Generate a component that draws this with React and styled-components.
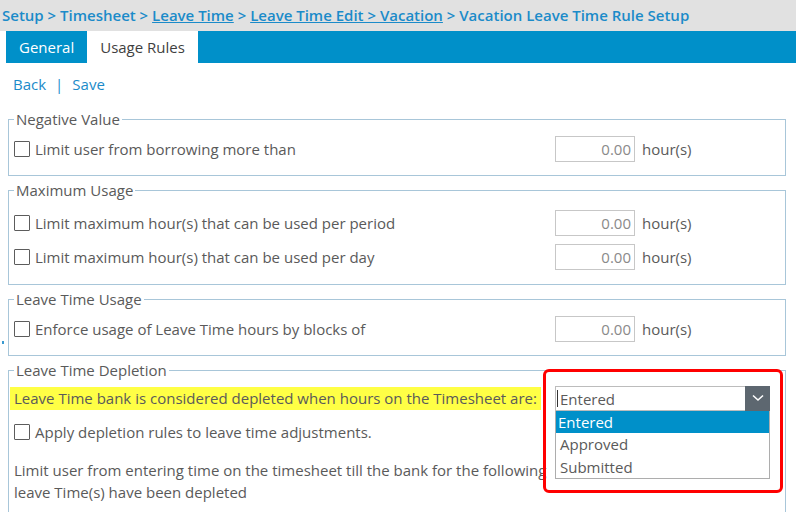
import React from 'react'
import styled, { createGlobalStyle } from 'styled-components'

const GlobalStyle = createGlobalStyle`
  body {
    margin: 0;
    background: #fff;
    font-family: "Open Sans", "Liberation Sans", sans-serif;
    color: #5a5a5a;
  }
`

const sections = [
  {
    title: 'Negative Value',
    rows: ['Limit user from borrowing more than'],
  },
  {
    title: 'Maximum Usage',
    rows: [
      'Limit maximum hour(s) that can be used per period',
      'Limit maximum hour(s) that can be used per day',
    ],
    roomy: true,
  },
  {
    title: 'Leave Time Usage',
    rows: ['Enforce usage of Leave Time hours by blocks of'],
    dot: true,
  },
]

const options = ['Entered', 'Approved', 'Submitted']

const App = () => {
  return (
    <Page>
      <GlobalStyle />
      <Breadcrumb>
        Setup &gt; Timesheet &gt; <Crumb>Leave Time</Crumb> &gt;{' '}
        <Crumb>Leave Time Edit &gt; Vacation</Crumb> &gt; Vacation Leave Time Rule Setup
      </Breadcrumb>
      <TabBar>
        <Tab>General</Tab>
        <Tab active>Usage Rules</Tab>
      </TabBar>
      <Actions>
        <ActionLink>Back</ActionLink>
        <Divider>|</Divider>
        <ActionLink>Save</ActionLink>
      </Actions>

      {sections.map(section => (
        <Section key={section.title} dot={section.dot} roomy={section.roomy}>
          <Legend>{section.title}</Legend>
          {section.rows.map(label => (
            <Row key={label}>
              <Label>
                <Check />
                {label}
              </Label>
              <HourInput readOnly value="0.00" />
              <Unit>hour(s)</Unit>
            </Row>
          ))}
        </Section>
      ))}

      <Section tight>
        <Legend>Leave Time Depletion</Legend>
        <Row>
          <Label>
            <Highlight>Leave Time bank is considered depleted when hours on the Timesheet are:</Highlight>
          </Label>
          <SelectWrap>
            <SelectBox>
              <SelectValue>Entered</SelectValue>
              <Arrow>
                <svg width="12" height="8" viewBox="0 0 12 8">
                  <polyline points="1,1.5 6,6 11,1.5" fill="none" stroke="#fff" strokeWidth="1.6" />
                </svg>
              </Arrow>
            </SelectBox>
            <OptionList>
              {options.map((opt, i) => (
                <Option key={opt} selected={i === 0}>{opt}</Option>
              ))}
            </OptionList>
            <Callout />
          </SelectWrap>
        </Row>
        <Row>
          <Label>
            <Check />
            Apply depletion rules to leave time adjustments.
          </Label>
        </Row>
        <Note>
          Limit user from entering time on the timesheet till the bank for the following
          leave Time(s) have been depleted
        </Note>
      </Section>
    </Page>
  )
}

const Page = styled.div`
  width: 796px;
  height: 512px;
  overflow: hidden;
`

const Breadcrumb = styled.div`
  height: 31px;
  background: #e1e1e1;
  padding-left: 2px;
  font-size: 15px;
  font-weight: 600;
  line-height: 31px;
  color: #1b8bc9;
  white-space: nowrap;
`

const Crumb = styled.span`
  text-decoration: underline;
`

const TabBar = styled.div`
  display: flex;
  height: 32px;
  margin-left: 6px;
  background: #0090c9;
`

const Tab = styled.div`
  display: flex;
  align-items: center;
  padding: 0 13px;
  font-size: 15px;
  color: ${props => (props.active ? '#3f3f3f' : '#fff')};
  background: ${props => (props.active ? '#fff' : 'transparent')};
`

const Actions = styled.div`
  display: flex;
  align-items: center;
  gap: 9px;
  height: 42px;
  padding: 0 13px;
  margin-bottom: 4px;
  font-size: 15px;
  color: #1b8bc9;
`

const ActionLink = styled.span`
  cursor: pointer;
`

const Divider = styled.span`
  color: #1b8bc9;
`

const Section = styled.fieldset`
  position: relative;
  margin: 0 10px 4px 8px;
  padding: ${props => (props.roomy ? '6px 8px 10px 5px' : props.tight ? '1px 8px 9px 5px' : '3px 8px 9px 5px')};
  border: 1px solid #a8c6d9;
  min-width: 0;
  ${props =>
    props.dot &&
    `&::before {
      content: '';
      position: absolute;
      left: -7px;
      top: 32px;
      width: 2px;
      height: 3px;
      background: #3a9ad0;
    }`}
`

const Legend = styled.legend`
  padding: 0 2px;
  font-size: 15px;
  line-height: 20px;
  color: #5a5a5a;
`

const Row = styled.div`
  display: flex;
  align-items: center;
  height: 34px;
`

const Label = styled.div`
  display: flex;
  align-items: center;
  gap: 5px;
  width: 541px;
  font-size: 15px;
  color: #5a5a5a;
  white-space: nowrap;
`

const Check = styled.span`
  width: 14px;
  height: 14px;
  border: 1px solid #5c5c5c;
  border-radius: 1px;
  background: #fff;
  flex: none;
`

const HourInput = styled.input`
  box-sizing: border-box;
  width: 80px;
  height: 26px;
  padding: 0 3px;
  border: 1px solid #c7c7c7;
  font-family: inherit;
  font-size: 15px;
  color: #8a8a8a;
  text-align: right;
  outline: none;
`

const Unit = styled.span`
  margin-left: 7px;
  font-size: 15px;
  color: #5a5a5a;
`

const Highlight = styled.span`
  margin-left: -4px;
  padding: 1px 4px;
  background: #ffff45;
  line-height: 21px;
`

const SelectWrap = styled.div`
  position: relative;
  width: 215px;
`

const SelectBox = styled.div`
  box-sizing: border-box;
  display: flex;
  height: 25px;
  border: 1px solid #bcbcbc;
  background: #fff;
`

const SelectValue = styled.div`
  flex: 1;
  padding-left: 2px;
  border-left: 1px solid #333;
  margin: 3px 0 3px 1px;
  line-height: 18px;
  font-size: 15px;
  color: #5a5a5a;
`

const Arrow = styled.div`
  display: flex;
  align-items: center;
  justify-content: center;
  width: 25px;
  margin: -1px -1px -1px 0;
  background: #5d6770;
`

const OptionList = styled.div`
  position: absolute;
  top: 25px;
  left: 0;
  right: 0;
  box-sizing: border-box;
  border: 1px solid #adadad;
  border-top: none;
  background: #fff;
  z-index: 2;
`

const Option = styled.div`
  height: 22.5px;
  padding-left: ${props => (props.selected ? '2px' : '4px')};
  line-height: 23px;
  font-size: 15px;
  color: ${props => (props.selected ? '#fff' : '#5a5a5a')};
  background: ${props => (props.selected ? '#0090c9' : '#fff')};
`

const Callout = styled.div`
  position: absolute;
  left: -12px;
  top: -17px;
  width: 240px;
  height: 124px;
  box-sizing: border-box;
  border: 3px solid #ff0000;
  border-radius: 6px;
  pointer-events: none;
  z-index: 3;
`

const Note = styled.p`
  width: 545px;
  margin: 10px 0 0;
  font-size: 15px;
  line-height: 22px;
  color: #5a5a5a;
`

export default App
